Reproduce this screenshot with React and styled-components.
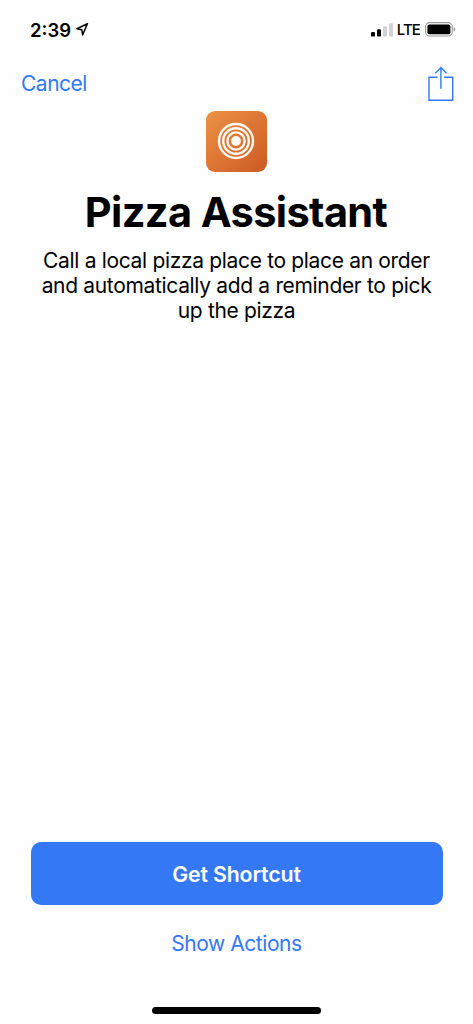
import React from "react";
import styled, { createGlobalStyle } from "styled-components";

const GlobalStyle = createGlobalStyle`
  * {
    box-sizing: border-box;
  }

  body {
    margin: 0;
    background: #fefefe;
    font-family: Inter, "Liberation Sans", sans-serif;
    color: #000;
  }

  svg {
    display: block;
  }
`;

const Screen = styled.div`
  display: flex;
  flex-direction: column;
  height: 1024px;
  max-width: 473px;
`;

const StatusBar = styled.div`
  display: flex;
  align-items: center;
  justify-content: space-between;
  height: 58px;
  padding: 1px 17px 0 30px;
`;

const StatusGroup = styled.div`
  display: flex;
  align-items: center;
  gap: ${props => props.$gap || "5px"};
`;

const Time = styled.span`
  font-size: 18.5px;
  font-weight: 600;
  line-height: 22px;
  letter-spacing: 0;
`;

const Carrier = styled.span`
  font-size: 15px;
  font-weight: 500;
  line-height: 20px;
  letter-spacing: -0.9px;
  margin-right: 1px;
`;

const NavBar = styled.nav`
  display: flex;
  align-items: center;
  justify-content: space-between;
  height: 51px;
  padding: 0 19px 0 21px;
`;

const TextButton = styled.button`
  padding: 0;
  border: none;
  background: none;
  color: #3478f6;
  font-family: inherit;
  font-size: 21px;
  line-height: 26px;
  letter-spacing: ${props => props.$spacing || "0"};
  cursor: pointer;
`;

const IconButton = styled(TextButton)`
  line-height: 0;
`;

const Content = styled.main`
  display: flex;
  flex: 1;
  flex-direction: column;
  align-items: center;
  padding-top: 2px;
`;

const Tile = styled.div`
  display: flex;
  align-items: center;
  justify-content: center;
  width: 61px;
  height: 61px;
  border-radius: 9px;
  background: linear-gradient(135deg, #ec9345 0%, #dd7534 50%, #cd5a24 100%);
`;

const Title = styled.h1`
  margin: 15px 1px 0 0;
  font-size: 41.5px;
  font-weight: 700;
  line-height: 50px;
  letter-spacing: -0.62px;
`;

const Description = styled.p`
  margin: 10.5px 0 0;
  font-size: 21px;
  line-height: 25.2px;
  letter-spacing: -0.33px;
  text-align: center;
  white-space: nowrap;
`;

const Footer = styled.footer`
  display: flex;
  flex-direction: column;
  align-items: center;
  padding: 0 30.5px 10px;
`;

const PrimaryButton = styled.button`
  width: 100%;
  height: 63px;
  margin-bottom: 26px;
  border: none;
  border-radius: 10px;
  background: #3478f6;
  color: #fff;
  font-family: inherit;
  font-size: 21.3px;
  font-weight: 600;
  letter-spacing: -0.15px;
  cursor: pointer;
`;

const HomeIndicator = styled.div`
  width: 169px;
  height: 7px;
  margin-top: 50px;
  border-radius: 4px;
  background: #000;
`;

const LocationIcon = () => (
    <svg width="14" height="14" viewBox="0 0 14 14" fill="none">
        <path d="M11.4.8.9 5.8l4.9.9.8 5.3z" stroke="#000" strokeWidth="1.5" strokeLinejoin="round" />
    </svg>
);

const SignalIcon = () => (
    <svg width="22" height="14" viewBox="0 0 22 14">
        <rect x="0" y="9" width="4" height="4.6" rx="1.2" />
        <rect x="6" y="6.3" width="4" height="7.3" rx="1.2" />
        <rect x="12" y="3.3" width="4" height="10.3" rx="1.2" fill="#d2d2d2" />
        <rect x="18" y="0.3" width="4" height="13.3" rx="1.2" fill="#d2d2d2" />
    </svg>
);

const BatteryIcon = () => (
    <svg width="31" height="15" viewBox="0 0 31 15">
        <rect x="0.6" y="0.6" width="26.6" height="13.4" rx="4" fill="none" stroke="#999" strokeWidth="1.1" />
        <rect x="2.4" y="2.4" width="23" height="9.8" rx="2" />
        <path d="M28.6 5c2.2.8 2.2 3.8 0 4.6z" fill="#999" />
    </svg>
);

const ShareIcon = () => (
    <svg width="26" height="36" viewBox="0 0 26 36" fill="none" stroke="#3478f6" strokeWidth="1.4">
        <path d="M9.5 11.3H1v23h23.7v-23H16" />
        <path d="M12.9 22.8V1.8M7.3 7.2l5.6-5.6 5.6 5.6" />
    </svg>
);

const RingsIcon = () => (
    <svg width="39" height="39" viewBox="0 0 39 39" fill="none" stroke="#fffaf2" strokeWidth="2.4">
        <circle cx="19" cy="19" r="17" />
        <circle cx="19" cy="19" r="12.8" />
        <circle cx="19" cy="19" r="8.6" />
        <circle cx="19" cy="19" r="4.9" fill="#fffaf2" stroke="none" />
    </svg>
);

const App = () => {
    return (
        <>
            <GlobalStyle />
            <Screen>
                <StatusBar>
                    <StatusGroup>
                        <Time>2:39</Time>
                        <LocationIcon />
                    </StatusGroup>
                    <StatusGroup $gap="4px">
                        <SignalIcon />
                        <Carrier>LTE</Carrier>
                        <BatteryIcon />
                    </StatusGroup>
                </StatusBar>
                <NavBar>
                    <TextButton $spacing="-0.5px">Cancel</TextButton>
                    <IconButton aria-label="Share">
                        <ShareIcon />
                    </IconButton>
                </NavBar>
                <Content>
                    <Tile>
                        <RingsIcon />
                    </Tile>
                    <Title>Pizza Assistant</Title>
                    <Description>
                        Call a local pizza place to place an order
                        <br />
                        and automatically add a reminder to pick
                        <br />
                        up the pizza
                    </Description>
                </Content>
                <Footer>
                    <PrimaryButton>Get Shortcut</PrimaryButton>
                    <TextButton $spacing="-0.45px">Show Actions</TextButton>
                    <HomeIndicator />
                </Footer>
            </Screen>
        </>
    );
};

export default App;
